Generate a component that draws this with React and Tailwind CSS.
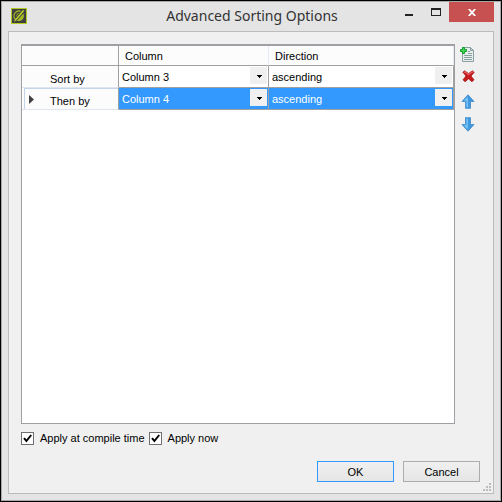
import React from "react";

const COLUMNS = ["Column 1", "Column 2", "Column 3", "Column 4"];
const DIRECTIONS = ["ascending", "descending"];

function AppIcon() {
  return (
    <svg width="16" height="16" viewBox="0 0 16 16" aria-hidden="true">
      <rect x="0.5" y="0.5" width="15" height="15" fill="#3f4041" stroke="#b4c81e" />
      <path d="M9.6 3.2 C5.6 2.2 2.8 5 3 8.4 C3.1 9.6 3.5 10.6 4.2 11.4" fill="none" stroke="#9caf26" strokeWidth="1.3" />
      <path d="M8.6 4.6 C6.2 4.6 4.8 6.4 5 9z" fill="#76842a" />
      <path d="M12.4 5.4 C14 9 11.6 13 7.4 13.1 C6.8 13.1 6.3 13 5.8 12.8z" fill="#a5b826" />
      <path d="M3 14 L4 11.4 L11.4 2.4 L13.4 2 L12.6 3.8 L5 12.6z" fill="#bccf2a" />
    </svg>
  );
}

function AddDocumentIcon() {
  return (
    <svg width="16" height="17" viewBox="0 0 16 17" aria-hidden="true">
      <path d="M2.5 1.5 H10.5 L13.5 4.5 V15.5 H2.5z" fill="#e6eeed" stroke="#8a9fa0" />
      <path d="M10.5 1.5 V4.5 H13.5z" fill="#cfdad9" stroke="#8a9fa0" />
      <path d="M4 9.5 H12 M4 11.5 H12 M4 13.5 H12 M8 7.5 H12 M8 5.5 H10" stroke="#8ba0a1" />
      <path d="M2.5 1.5 H4.5 V3.5 H6.5 V5.5 H4.5 V7.5 H2.5 V5.5 H0.5 V3.5 H2.5z" fill="#3fdc52" stroke="#159a30" />
    </svg>
  );
}

function DeleteIcon() {
  return (
    <svg width="13" height="13" viewBox="0 0 13 13" aria-hidden="true">
      <path
        d="M0.8 2.2 L2.6 0.8 L6.5 3.6 L10.4 0.8 L12.2 2.4 L9 6 L12 9.8 L10 11.8 L6.5 8.8 L3 11.8 L1 9.8 L4 6z"
        fill="#c8191c"
        stroke="#a52020"
        strokeWidth="0.8"
      />
      <path d="M1.8 2.4 L2.8 1.8 L6.5 4.6 L10.2 1.8 L11.2 2.4" fill="none" stroke="#ea6a6a" strokeWidth="1.1" />
    </svg>
  );
}

function ArrowIcon({ down }) {
  return (
    <svg width="14" height="15" viewBox="0 0 14 15" aria-hidden="true">
      <g transform={down ? "matrix(1 0 0 -1 0 15)" : undefined}>
        <path d="M7 0.8 L13 7.5 H9.5 V14.3 H4.5 V7.5 H1z" fill="#3f98e0" stroke="#4a8dcb" strokeWidth="0.9" />
        <path d="M6.7 2.6 L3 6.7 H5.5 V13.3 H7z" fill="#7cc8f6" />
      </g>
    </svg>
  );
}

function CellSelect({ label, value, options, selected }) {
  return (
    <div className={"relative flex h-[21px] " + (selected ? "bg-[#3399ff] text-white" : "bg-white text-black")}>
      <select
        aria-label={label}
        defaultValue={value}
        className="h-full w-full appearance-none bg-transparent pl-[3px] outline-none"
      >
        {options.map((o) => (
          <option key={o} className="bg-white text-black">
            {o}
          </option>
        ))}
      </select>
      <span className="pointer-events-none absolute top-px right-px flex h-[17px] w-[17px] items-center justify-center bg-[#f0f0f0] pt-0.5 pl-0.5">
        <svg width="5" height="3" viewBox="0 0 5 3" shapeRendering="crispEdges" aria-hidden="true">
          <path d="M0 0 H5 V1 H4 V2 H3 V3 H2 V2 H1 V1 H0z" fill="#000" />
        </svg>
      </span>
    </div>
  );
}

function SortRow({ name, column, selected }) {
  return (
    <tr>
      <th className="border-r border-b border-b-[#dfe6f1] border-r-[#a0a0a0] bg-[#fcfcfd] p-0 text-left font-normal">
        <div
          className={
            "ml-0.5 flex h-[21px] items-center " + (selected ? "border-t border-l border-[#c3d3ea]" : "")
          }
        >
          <span className={selected ? "w-[25px] pl-1" : "w-[26px]"}>
            {selected && (
              <svg width="5" height="9" viewBox="0 0 5 9" aria-hidden="true">
                <path d="M0 0 L5 4.5 L0 9z" fill="#404040" />
              </svg>
            )}
          </span>
          <span className="pt-1">{name}</span>
        </div>
      </th>
      <td className="border-r border-b border-[#a0a0a0] p-0">
        <CellSelect label={name + " column"} value={column} options={COLUMNS} selected={selected} />
      </td>
      <td className="border-r border-b border-[#a0a0a0] p-0">
        <CellSelect label={name + " direction"} value="ascending" options={DIRECTIONS} selected={selected} />
      </td>
    </tr>
  );
}

function Check({ label }) {
  return (
    <label className="flex items-center gap-1.5">
      <span className="relative h-[13px] w-[13px]">
        <input
          type="checkbox"
          defaultChecked
          className="peer block h-full w-full appearance-none border border-[#707070] bg-white"
        />
        <svg
          className="pointer-events-none absolute inset-0 hidden peer-checked:block"
          width="13"
          height="13"
          viewBox="0 0 13 13"
          aria-hidden="true"
        >
          <path d="M3 6.2 L5.4 9 L10.2 3" fill="none" stroke="#000" strokeWidth="2" />
        </svg>
      </span>
      {label}
    </label>
  );
}

export default function App() {
  return (
    <div className="flex h-screen flex-col border border-black bg-[#e4e4e4] font-['Liberation_Sans',Arial,sans-serif] text-[11px] leading-4 text-black">
      <div className="flex min-h-0 flex-1 flex-col border border-[#a8a8a8]">
        <header className="flex h-[29px] shrink-0 items-start pr-1.5 pl-[9px]">
          <div className="flex w-[98px] pt-1.5">
            <AppIcon />
          </div>
          <h1 className="flex-1 pt-1 text-center font-['Noto_Sans','Open_Sans',sans-serif] text-[14px] leading-5 text-[#333]">
            Advanced Sorting Options
          </h1>
          <div className="flex h-5">
            <button type="button" aria-label="Minimize" className="flex w-[27px] justify-center pt-3">
              <svg width="8" height="2" aria-hidden="true">
                <rect width="8" height="2" fill="#222" />
              </svg>
            </button>
            <button type="button" aria-label="Maximize" className="flex w-[27px] justify-center pt-1.5">
              <svg width="10" height="8" shapeRendering="crispEdges" aria-hidden="true">
                <path d="M0 0 H10 V8 H0z M1 2 V7 H9 V2z" fill="#222" fillRule="evenodd" />
              </svg>
            </button>
            <button type="button" aria-label="Close" className="flex w-[45px] items-center justify-center bg-[#c75050]">
              <svg width="8" height="7" viewBox="0 0 8 7" aria-hidden="true">
                <path d="M0.8 0 L7.2 7 M7.2 0 L0.8 7" stroke="#fff" strokeWidth="1.8" />
              </svg>
            </button>
          </div>
        </header>

        <main className="relative mx-1.5 mb-1.5 flex min-h-0 flex-1 flex-col border border-[#bcbcbc] bg-[#f0f0f0] px-3 pt-3 pb-[11px]">
          <div className="flex min-h-0 flex-1">
            <div className="min-w-0 flex-1 border border-t-2 border-[#a0a0a4] bg-white">
              <table className="w-full table-fixed border-separate border-spacing-0">
                <colgroup>
                  <col className="w-[97px]" />
                  <col className="w-[150px]" />
                  <col />
                </colgroup>
                <thead>
                  <tr className="h-5 bg-[#fcfcfd] text-left">
                    <td className="border-r border-b border-[#a0a0a0] p-0" />
                    <th className="border-r border-b border-r-[#e3eaf5] border-b-[#a0a0a0] p-0 pl-1.5 font-normal">
                      Column
                    </th>
                    <th className="border-r border-b border-r-[#e3eaf5] border-b-[#a0a0a0] p-0 pl-1.5 font-normal">
                      Direction
                    </th>
                  </tr>
                </thead>
                <tbody>
                  <SortRow name="Sort by" column="Column 3" />
                  <SortRow name="Then by" column="Column 4" selected />
                </tbody>
              </table>
            </div>
            <div className="flex w-[26px] shrink-0 flex-col items-center pt-0.5">
              <button type="button" aria-label="Add level" className="flex h-[22px] items-start">
                <AddDocumentIcon />
              </button>
              <button type="button" aria-label="Delete level" className="flex h-[22px] items-start pt-0.5">
                <DeleteIcon />
              </button>
              <button type="button" aria-label="Move up" className="flex h-[23px] items-start pt-1">
                <ArrowIcon />
              </button>
              <button type="button" aria-label="Move down" className="flex h-[23px] items-start pt-1">
                <ArrowIcon down />
              </button>
            </div>
          </div>

          <div className="flex gap-1 pt-1.5">
            <Check label="Apply at compile time" />
            <Check label="Apply now" />
          </div>

          <div className="mt-[15px] flex justify-end gap-[9px] pr-px">
            <button
              type="button"
              className="h-[21px] w-[77px] border border-[#3399ff] bg-linear-to-b from-[#f0f0f0] to-[#e5e5e5]"
            >
              OK
            </button>
            <button
              type="button"
              className="h-[21px] w-[77px] border border-[#acacac] bg-linear-to-b from-[#f0f0f0] to-[#e5e5e5]"
            >
              Cancel
            </button>
          </div>

          <svg
            className="absolute right-0.5 bottom-0.5"
            width="8"
            height="8"
            viewBox="0 0 8 8"
            fill="#bdbdbd"
            shapeRendering="crispEdges"
            aria-hidden="true"
          >
            <path d="M6 0h2v2h-2z M3 3h2v2h-2z M6 3h2v2h-2z M0 6h2v2h-2z M3 6h2v2h-2z M6 6h2v2h-2z" />
          </svg>
        </main>
      </div>
    </div>
  );
}
